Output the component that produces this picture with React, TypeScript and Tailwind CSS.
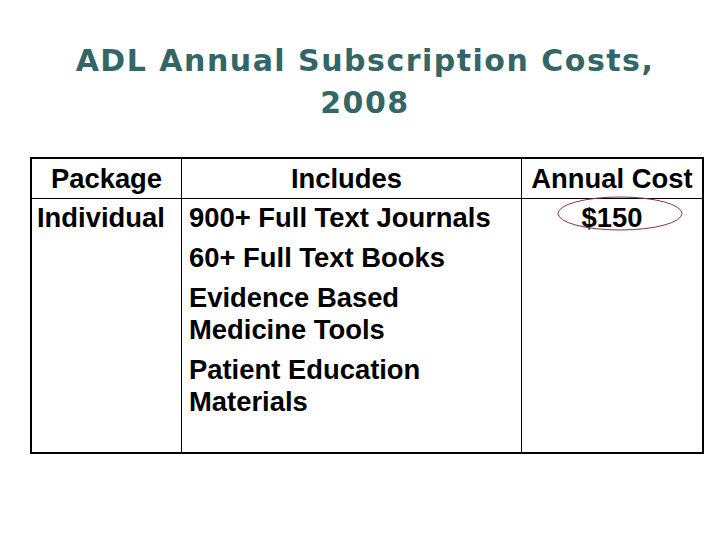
export default function App() {
  return (
    <div className="w-[728px] h-[546px] bg-white overflow-hidden">
      <h1 className="pt-[40px] pl-[2px] text-center text-[30px] tracking-[1.5px] leading-[42px] font-bold text-[#336666] font-['DejaVu_Sans',Verdana,sans-serif]">
        ADL Annual Subscription Costs,
        <br />
        2008
      </h1>
      <div className="mt-[33px] ml-[30px] w-[674px] border-2 border-black font-['Liberation_Sans',Arial,sans-serif] font-bold text-[27.4px] text-black">
        <div className="grid grid-cols-[150px_340px_180px] h-[40px] border-b border-black items-center leading-[32px]">
          <div className="border-r border-black h-full flex items-center justify-center">Package</div>
          <div className="border-r border-black h-full flex items-center justify-center pr-[10px]">Includes</div>
          <div className="text-center">Annual Cost</div>
        </div>
        <div className="grid grid-cols-[150px_340px_180px] h-[253px]">
          <div className="border-r border-black pl-[5px] pt-[3px] leading-[32px]">Individual</div>
          <div className="border-r border-black pl-[7px] pt-[3px] flex flex-col gap-[8px] leading-[32px]">
            <div>900+ Full Text Journals</div>
            <div>60+ Full Text Books</div>
            <div>Evidence Based<br />Medicine Tools</div>
            <div>Patient Education<br />Materials</div>
          </div>
          <div className="relative text-center pt-[3px] leading-[32px]">
            <span>$150</span>
            <svg className="absolute left-[35px] top-[-3px]" width="126" height="35" viewBox="0 0 126 35">
              <ellipse cx="63" cy="17.5" rx="62" ry="16.5" fill="none" stroke="#8b2e5a" strokeWidth="1" />
            </svg>
          </div>
        </div>
      </div>
    </div>
  );
}
